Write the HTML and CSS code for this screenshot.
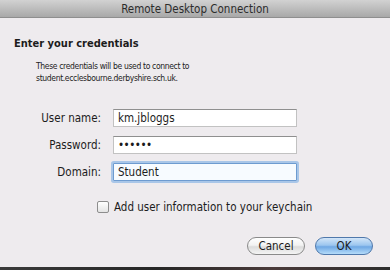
FILE: index.html
```html
<!DOCTYPE html>
<html lang="en">

<head>
    <meta charset="UTF-8">
    <meta name="viewport" content="width=device-width, initial-scale=1.0">
    <title>Remote Desktop Connection</title>
    <link rel="stylesheet" href="styles.css">
</head>

<body>
    <div class="window">
        <div class="titlebar">Remote Desktop Connection</div>

        <div class="content">
            <h1>Enter your credentials</h1>
            <p class="info">These credentials will be used to connect to<br>student.ecclesbourne.derbyshire.sch.uk.</p>

            <div class="fields">
                <label for="user">User name:</label>
                <div class="input" id="user">km.jbloggs</div>

                <label for="pass">Password:</label>
                <div class="input password" id="pass">&bull;&bull;&bull;&bull;&bull;&bull;</div>

                <label for="domain">Domain:</label>
                <div class="input focused" id="domain">Student</div>
            </div>

            <div class="keychain">
                <span class="checkbox"></span>
                <span>Add user information to your keychain</span>
            </div>

            <div class="buttons">
                <button class="btn">Cancel</button>
                <button class="btn default">OK</button>
            </div>
        </div>
    </div>
    <div class="desktop"></div>
</body>

</html>
```

FILE: styles.css
```css
html {
    font-family: "DejaVu Sans Condensed", "DejaVu Sans", sans-serif;
    font-stretch: condensed;
}

body {
    margin: 0;
    width: 390px;
    height: 270px;
    overflow: hidden;
    background: #2a2a2a;
    color: #1c1c1c;
}

.window {
    height: 267px;
    display: flex;
    flex-direction: column;
    background: #eeebee;
}

.titlebar {
    height: 17px;
    line-height: 18px;
    border-bottom: 1px solid #8e8e8e;
    background: linear-gradient(#d2d2d2, #bdbdbd 50%, #a8a8a8);
    text-align: center;
    font-size: 11.5px;
    color: #2c2c2c;
}

.content {
    flex: 1;
    padding: 19px 17px 0 14px;
    display: flex;
    flex-direction: column;
}

h1 {
    margin: 0;
    font-size: 11px;
    line-height: 14px;
    font-weight: bold;
}

.info {
    margin: 9px 0 0 22px;
    font-size: 8.5px;
    letter-spacing: -0.35px;
    line-height: 12px;
}

.fields {
    margin: 25px 0 0 1px;
    display: grid;
    grid-template-columns: 86px 184px;
    column-gap: 12px;
    row-gap: 9px;
    align-items: center;
    font-size: 11.5px;

    label {
        text-align: right;
    }
}

.input {
    height: 16px;
    line-height: 16px;
    padding: 0 4px;
    background: #fff;
    border: 1px solid #c2c2c2;
    border-top-color: #8f8f8f;
    font-size: 11.5px;
}

.password {
    font-size: 11.5px;
    letter-spacing: -0.5px;
}

.focused {
    background: #f7fbff;
    border-color: #6d9bd0;
    box-shadow: 0 0 0 2px #a9c6e8;
    border-radius: 1px;
}

.keychain {
    margin: 20px 0 0 83px;
    display: flex;
    align-items: center;
    gap: 5px;
    font-size: 11.5px;
    height: 12px;
}

.checkbox {
    width: 10px;
    height: 10px;
    border: 1px solid #8d8d8d;
    border-radius: 2px;
    background: linear-gradient(#ffffff, #e4e4e4);
}

.buttons {
    margin-top: 24px;
    display: flex;
    justify-content: flex-end;
    gap: 10px;
}

.btn {
    width: 58px;
    height: 18px;
    padding: 0;
    border: 1px solid #8a8a8a;
    border-radius: 9px;
    background: linear-gradient(#ffffff, #f2f2f2 45%, #dcdcdc 55%, #f4f4f4);
    font-family: inherit;
    font-stretch: condensed;
    font-size: 11.5px;
    color: #1c1c1c;
}

.default {
    border-color: #4f78ab;
    background: linear-gradient(#d3e6f8, #9cc6ef 45%, #6fa8e4 55%, #b5dcfa);
}

.desktop {
    height: 3px;
    background: linear-gradient(90deg, #3a3a3a, #262626 40%, #4a3a3a 70%, #2d2d2d);
}
```
